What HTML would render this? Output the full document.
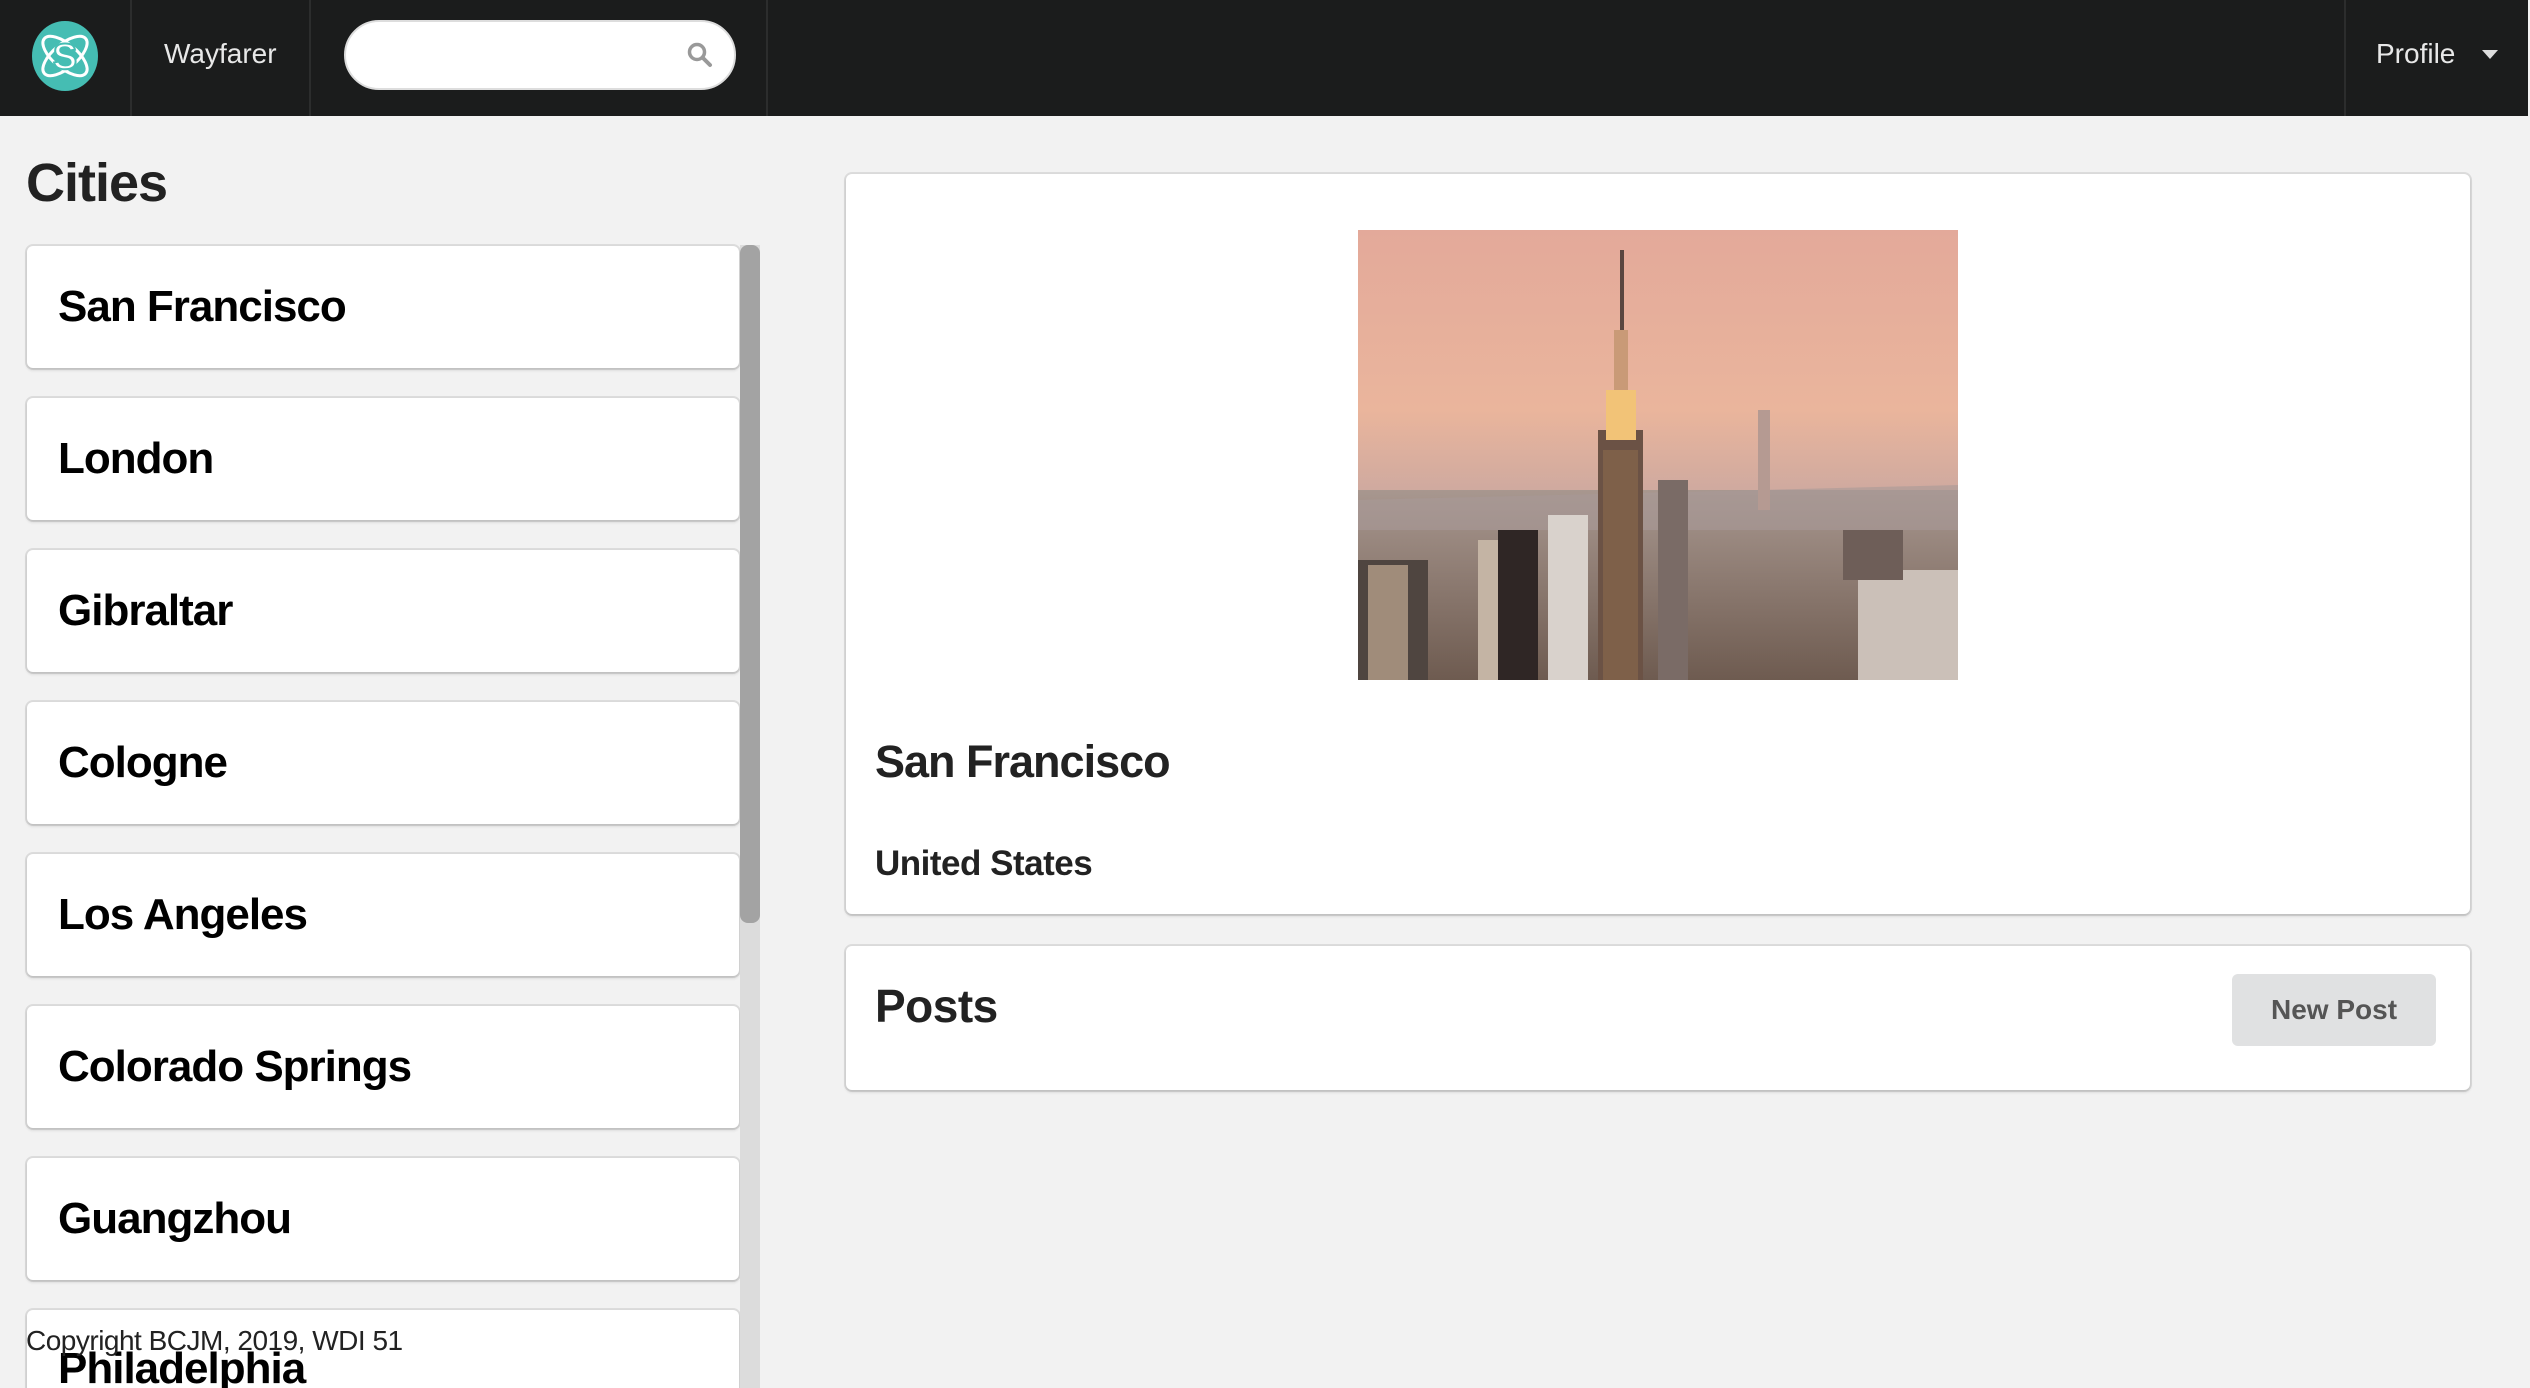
<!DOCTYPE html>
<html><head><meta charset="utf-8"><style>
*{box-sizing:border-box;margin:0;padding:0}
html{width:2530px;height:1388px;overflow:hidden}
body{width:2530px;height:1388px;overflow:hidden;background:#f2f2f2;font-family:"Liberation Sans",sans-serif;position:relative;color:#212121}
.nav{position:absolute;left:0;top:0;width:2528px;height:116px;background:#1b1c1c}
.div{position:absolute;top:0;width:2px;height:116px;background:#2c2d2d}
.card{position:absolute;background:#fff;border-radius:6px;box-shadow:0 2px 3px rgba(0,0,0,.15),0 0 0 2px #dcdcdc}
.city{left:27px;width:712px;height:122px}
.city span{position:absolute;left:31px;top:50%;transform:translateY(-50%);font-size:44px;font-weight:bold;color:#000;letter-spacing:-1px}
</style></head><body>
<div class="nav">
 <svg style="position:absolute;left:29px;top:20px" width="72" height="72" viewBox="0 0 72 72">
  <ellipse cx="36" cy="36" rx="33" ry="35" fill="#45bdb3"/>
  <g fill="none" stroke="#fff" stroke-width="3">
   <ellipse cx="36" cy="36" rx="27" ry="12" transform="rotate(40 36 36)"/>
   <ellipse cx="36" cy="36" rx="27" ry="12" transform="rotate(-40 36 36)"/>
  </g>
  <text x="36" y="49" text-anchor="middle" font-size="36" font-weight="bold" fill="#fff" stroke="#45bdb3" stroke-width="2" font-family="Liberation Sans">S</text>
 </svg>
 <div class="div" style="left:130px"></div>
 <div style="position:absolute;left:164px;top:38px;font-size:28px;color:#e8e8e8">Wayfarer</div>
 <div class="div" style="left:309px"></div>
 <div style="position:absolute;left:344px;top:20px;width:392px;height:70px;border-radius:35px;background:#fff;border:2px solid #ddd"></div>
 <svg style="position:absolute;left:686px;top:41px" width="28" height="28" viewBox="0 0 28 28"><circle cx="11" cy="11" r="7.5" fill="none" stroke="#999" stroke-width="3.5"/><path d="M16.5 16.5 L24 24" stroke="#999" stroke-width="4" stroke-linecap="round"/></svg>
 <div class="div" style="left:766px"></div>
 <div class="div" style="left:2344px"></div>
 <div style="position:absolute;left:2376px;top:38px;font-size:28px;color:#e8e8e8">Profile</div>
 <div style="position:absolute;left:2482px;top:50px;width:0;height:0;border-left:8px solid transparent;border-right:8px solid transparent;border-top:9px solid #ddd"></div>
</div>

<div style="position:absolute;left:26px;top:152px;font-size:54px;font-weight:bold;color:#222;letter-spacing:-1px">Cities</div>

<div class="card city" style="top:246px"><span>San Francisco</span></div>
<div class="card city" style="top:398px"><span>London</span></div>
<div class="card city" style="top:550px"><span>Gibraltar</span></div>
<div class="card city" style="top:702px"><span>Cologne</span></div>
<div class="card city" style="top:854px"><span>Los Angeles</span></div>
<div class="card city" style="top:1006px"><span>Colorado Springs</span></div>
<div class="card city" style="top:1158px"><span>Guangzhou</span></div>
<div class="card city" style="top:1310px;height:78px;border-bottom-left-radius:0;border-bottom-right-radius:0"><span style="top:34px;transform:none">Philadelphia</span></div>
<div style="position:absolute;left:740px;top:245px;width:20px;height:1143px;background:#dcdcdc"></div>
<div style="position:absolute;left:740px;top:245px;width:20px;height:678px;background:#a3a3a3;border-radius:8px"></div>
<div style="position:absolute;left:26px;top:1325px;font-size:28px;color:#222;letter-spacing:-0.5px">Copyright BCJM, 2019, WDI 51</div>

<div class="card" style="left:846px;top:174px;width:1624px;height:740px">
 <svg style="position:absolute;left:512px;top:56px" width="600" height="450" viewBox="0 0 600 450">
  <defs>
   <linearGradient id="sky" x1="0" y1="0" x2="0" y2="1"><stop offset="0" stop-color="#e3a99a"/><stop offset=".4" stop-color="#eab59c"/><stop offset=".62" stop-color="#c9a7a0"/><stop offset="1" stop-color="#8d7f80"/></linearGradient>
   <linearGradient id="city" x1="0" y1="0" x2="0" y2="1"><stop offset="0" stop-color="#a8978f"/><stop offset="1" stop-color="#6e5b50"/></linearGradient>
  </defs>
  <rect width="600" height="450" fill="url(#sky)"/>
  <rect y="260" width="600" height="190" fill="url(#city)"/>
  <path d="M0 270 L600 255 L600 300 L0 300Z" fill="#a89a98" opacity=".6"/>
  <rect x="240" y="200" width="45" height="250" fill="#6b5245"/>
  <rect x="248" y="160" width="30" height="50" fill="#f2c377"/>
  <rect x="262" y="20" width="4" height="140" fill="#5a4640"/>
  <rect x="256" y="100" width="14" height="60" fill="#c99a77"/>
  <rect x="245" y="220" width="35" height="230" fill="#8a6a4d" opacity=".6"/>
  <rect x="0" y="330" width="70" height="120" fill="#4f4540"/>
  <rect x="10" y="335" width="40" height="115" fill="#a08c7a"/>
  <rect x="120" y="310" width="60" height="140" fill="#c4b4a4"/>
  <rect x="140" y="300" width="40" height="150" fill="#2f2625"/>
  <rect x="190" y="285" width="40" height="165" fill="#d9d2cc"/>
  <rect x="500" y="340" width="100" height="110" fill="#cbc0b8"/>
  <rect x="300" y="250" width="30" height="200" fill="#7a6b66"/>
  <rect x="485" y="300" width="60" height="50" fill="#6e5e58"/>
  <rect x="400" y="180" width="12" height="100" fill="#b59a92"/>
 </svg>
 <div style="position:absolute;left:29px;top:562px;font-size:45px;font-weight:bold;color:#222;letter-spacing:-1px">San Francisco</div>
 <div style="position:absolute;left:29px;top:670px;font-size:35px;font-weight:bold;color:#222;letter-spacing:-0.5px">United States</div>
</div>

<div class="card" style="left:846px;top:946px;width:1624px;height:144px">
 <div style="position:absolute;left:29px;top:33px;font-size:46px;font-weight:bold;color:#222;letter-spacing:-0.5px">Posts</div>
 <div style="position:absolute;left:1386px;top:28px;width:204px;height:72px;border-radius:6px;background:#e0e1e2;color:#555;font-size:28px;font-weight:bold;text-align:center;line-height:72px">New Post</div>
</div>
</body></html>
